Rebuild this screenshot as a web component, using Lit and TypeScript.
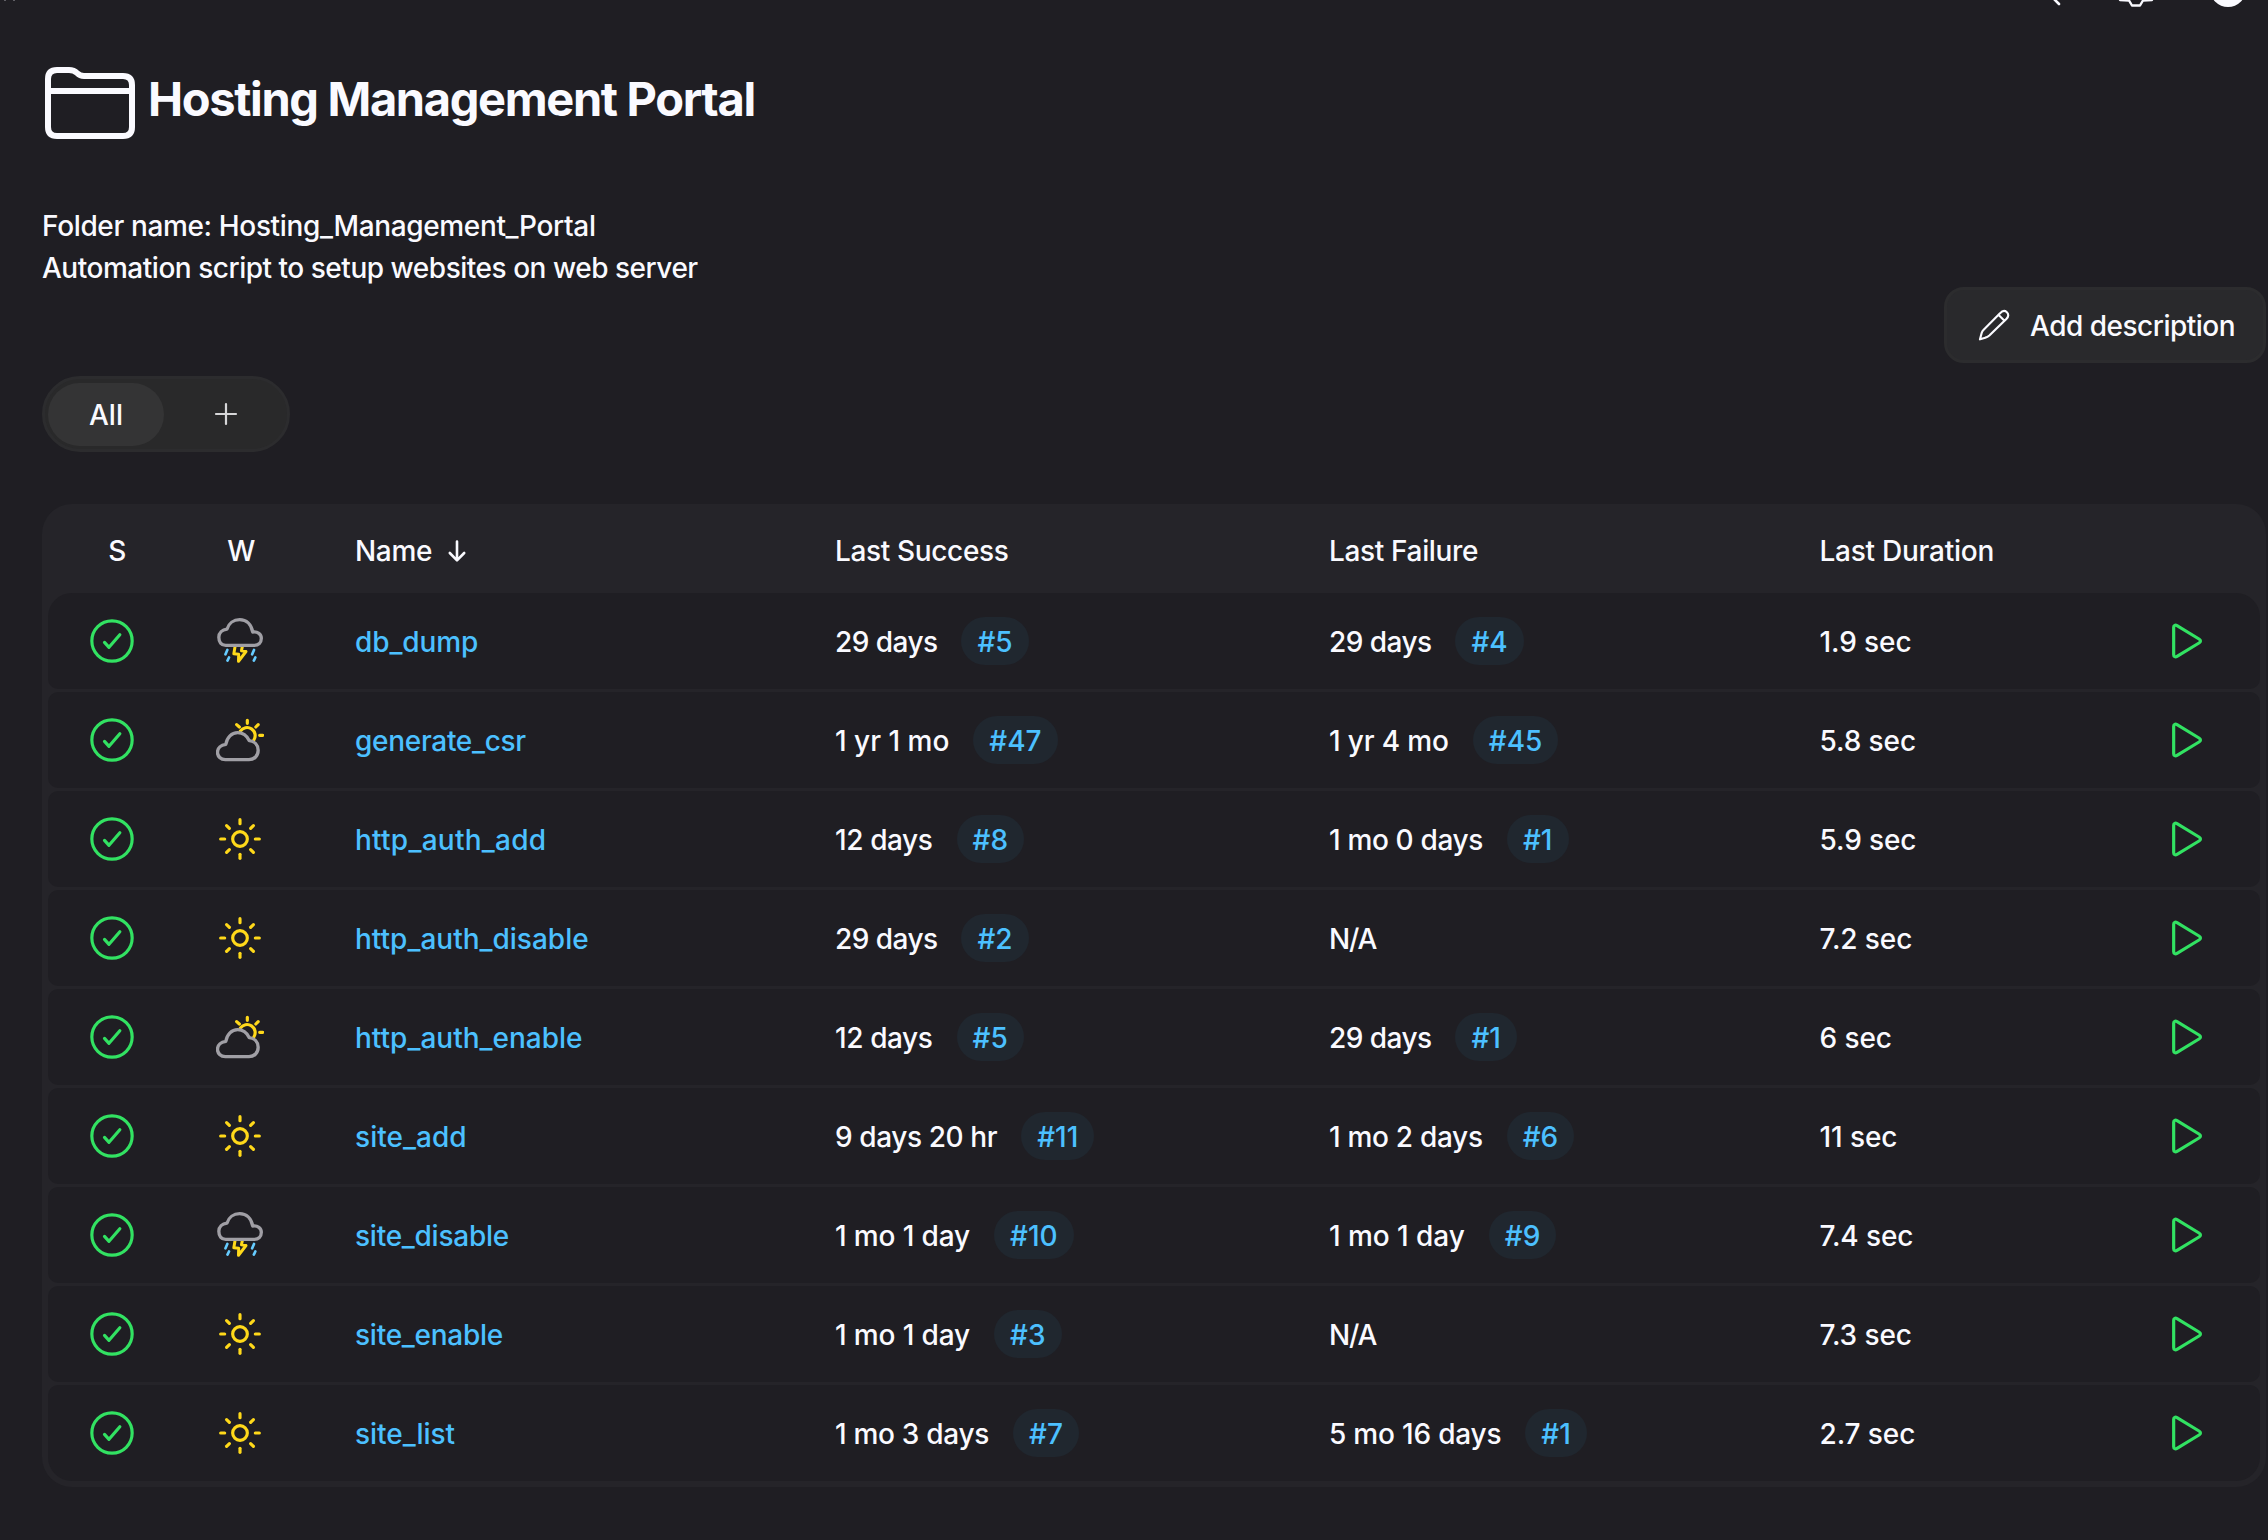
import { LitElement, html, css, svg } from "lit";
import { classMap } from "lit/directives/class-map.js";

type Weather = "storm" | "partly" | "sunny";
type Run = { text: string; ls?: number; build?: string };
type Job = { name: string; ls?: number; weather: Weather; success: Run; failure: Run; duration: string };

const JOBS: Job[] = [
  { name: "db_dump", ls: -0.1, weather: "storm", success: { text: "29 days", ls: -0.55, build: "#5" }, failure: { text: "29 days", ls: -0.55, build: "#4" }, duration: "1.9 sec" },
  { name: "generate_csr", ls: -0.3, weather: "partly", success: { text: "1 yr 1 mo", ls: 0, build: "#47" }, failure: { text: "1 yr 4 mo", ls: -0.15, build: "#45" }, duration: "5.8 sec" },
  { name: "http_auth_add", ls: 0.25, weather: "sunny", success: { text: "12 days", ls: -0.4, build: "#8" }, failure: { text: "1 mo 0 days", ls: -0.35, build: "#1" }, duration: "5.9 sec" },
  { name: "http_auth_disable", ls: 0, weather: "sunny", success: { text: "29 days", ls: -0.55, build: "#2" }, failure: { text: "N/A", ls: -1.2 }, duration: "7.2 sec" },
  { name: "http_auth_enable", ls: 0, weather: "partly", success: { text: "12 days", ls: -0.4, build: "#5" }, failure: { text: "29 days", ls: -0.55, build: "#1" }, duration: "6 sec" },
  { name: "site_add", ls: 0.05, weather: "sunny", success: { text: "9 days 20 hr", ls: -0.4, build: "#11" }, failure: { text: "1 mo 2 days", ls: -0.3, build: "#6" }, duration: "11 sec" },
  { name: "site_disable", ls: -0.25, weather: "storm", success: { text: "1 mo 1 day", ls: -0.12, build: "#10" }, failure: { text: "1 mo 1 day", ls: -0.05, build: "#9" }, duration: "7.4 sec" },
  { name: "site_enable", ls: -0.25, weather: "sunny", success: { text: "1 mo 1 day", ls: -0.12, build: "#3" }, failure: { text: "N/A", ls: -1.2 }, duration: "7.3 sec" },
  { name: "site_list", ls: -0.05, weather: "sunny", success: { text: "1 mo 3 days", ls: -0.3, build: "#7" }, failure: { text: "5 mo 16 days", ls: -0.2, build: "#1" }, duration: "2.7 sec" },
];

const RAYS = [0, 45, 90, 135, 180, 225, 270, 315];

const weatherIcons = {
  storm: () => html`<svg class="icon" viewBox="48 51 144 144">
    <path class="bolt" d="M105 140 L101.500 161 L116 163 L115.500 184 L138 154.500 L124.500 152 L127 140" />
    <path class="drop" d="M82 150 L76.500 163 M87 172.500 L82.500 182 M162 150 L156.500 163 M166 172.500 L161.500 182" />
    <path class="cloud" d="M77 136 C64 136 56.500 126 56.500 112 C56.500 98 67 89 81 87.500 C86 70 101 59 119 59 C139 59 154 73 158 96 C173 94 184 102 184 115 C184 128 175 136 163 136 Z" />
  </svg>`,
  partly: () => html`<svg class="icon" viewBox="48 348 144 144">
    <path class="sun" d="M121 393.500 A23.500 23.500 0 1 1 161.500 420 M142 361 V370 M110 374 L118 381 M174.500 374 L167.500 381 M179 406 H188" />
    <path class="cloud" d="M76 479 C62 479 52.500 469 52.500 457 C52.500 444 63 435 77.500 433 C81 412 95 398 113 398 C130 398 141 408 148 422 C163 424 174.500 435 174.500 451 C174.500 467 163 479 147 479 Z" />
  </svg>`,
  sunny: () => html`<svg class="icon" viewBox="-72 -72 144 144">
    <circle class="sun" r="22" />
    ${RAYS.map((a) => svg`<path class="sun" d=${a % 90 ? "M0 -45 V-57" : "M0 -46 V-58"} transform=${`rotate(${a})`} />`)}
  </svg>`,
};

class AppRoot extends LitElement {
  static styles = css`
    :host { display: block; }
    * { box-sizing: border-box; }
    .page {
      position: relative;
      width: 2268px;
      height: 1540px;
      overflow: hidden;
      background: #1f1e23;
      color: #fafaff;
      font: 460 28px/42px Inter, "Liberation Sans", sans-serif;
      white-space: nowrap;
      display: flex;
      flex-direction: column;
      padding: 0 2px 0 42px;
    }
    svg { display: block; fill: none; stroke-linecap: round; stroke-linejoin: round; }
    .topbar { position: absolute; left: 0; top: 0; width: 2268px; height: 10px; }
    .heading { display: flex; align-items: flex-start; height: 205px; padding-top: 60px; }
    .folder { width: 96px; height: 84px; stroke: #fafaff; stroke-width: 6; }
    h1 { margin: 9px 0 0 10px; font-size: 47px; line-height: 60px; font-weight: 680; letter-spacing: -1.35px; }
    .about { height: 82px; }
    .about p { margin: 0; }
    .about .first { letter-spacing: -0.36px; }
    .about .second { letter-spacing: -0.48px; }
    .button {
      align-self: flex-end;
      display: flex;
      align-items: center;
      width: 322px;
      height: 76px;
      padding-left: 29px;
      border: 3px solid #2c2c2e;
      border-radius: 20px;
      background: #29292c;
      letter-spacing: -0.5px;
    }
    .button span, .tab span { padding-top: 2px; }
    .pencil { width: 36px; height: 36px; margin-right: 18px; stroke: #fafaff; stroke-width: 6.5; }
    .tabs {
      display: flex;
      align-items: center;
      width: 248px;
      height: 76px;
      margin: 13px 0 52px;
      padding: 0 3px;
      border: 3px solid #2c2c2e;
      border-radius: 38px;
      background: #29292a;
    }
    .tab { display: flex; flex: none; align-items: center; justify-content: center; height: 63px; border-radius: 32px; }
    .tab.on { width: 116px; background: #343435; font-weight: 530; }
    .tab.add { width: 124px; }
    .plus { width: 24px; height: 24px; stroke: #d6d6d8; stroke-width: 2.2; }
    .table { display: flex; flex-direction: column; gap: 3px; width: 2224px; padding: 0 6px 6px; border-radius: 30px; background: #252429; }
    .row, .head { display: grid; grid-template-columns: 128px 128px 479px 495px 480px 300px 1fr; align-items: center; }
    .head { height: 86px; padding-top: 8px; font-weight: 510; letter-spacing: -0.35px; }
    .row { height: 96px; border-radius: 10px; background: #1f1e23; }
    .row.top { border-radius: 24px 24px 10px 10px; }
    .row.bottom { border-radius: 10px 10px 24px 24px; }
    .c { display: flex; justify-content: center; }
    .head .c { padding-left: 10px; }
    .head .w { padding-left: 2px; }
    .name { display: flex; align-items: center; padding: 2px 0 0 51px; }
    .arrow { width: 24px; height: 24px; margin-left: 13px; stroke: #fafaff; stroke-width: 2.6; }
    .run { display: flex; align-items: center; padding: 2px 0 0 52px; }
    .run.f { padding-left: 51px; }
    .run.d { padding-left: 61.5px; letter-spacing: -0.1px; }
    .head .run, .head .name { padding-top: 0; }
    .head .run.d { letter-spacing: -0.25px; }
    .link { color: #4cc0ff; }
    .badge { height: 48px; margin: -2px 0 0 24px; padding: 0 16px; border-radius: 24px; background: #20272f; color: #4cc0ff; line-height: 50px; }
    .icon { width: 48px; height: 48px; stroke-width: 9.5; }
    .ok, .play { stroke: #32e262; }
    .cloud { stroke: #a09fa5; stroke-width: 10; }
    .sun { stroke: #ffd91a; }
    .bolt { stroke: #ffd91a; stroke-width: 9; }
    .drop { stroke: #66ccff; stroke-width: 8; }
    .end { display: flex; justify-content: flex-end; padding-right: 48px; }
  `;

  private run(r: Run, cls: string) {
    return html`<div class=${"run " + cls}>
      <span style="letter-spacing:${r.ls ?? 0}px">${r.text}</span>${r.build ? html`<span class="badge">${r.build}</span>` : ""}
    </div>`;
  }

  private row(job: Job, i: number) {
    return html`<div class=${classMap({ row: true, top: i === 0, bottom: i === JOBS.length - 1 })}>
      <div class="c"><svg class="icon ok" viewBox="264 51 144 144"><circle cx="336" cy="123" r="60.500" /><path d="M313.500 127 L327 142 L359.500 104" /></svg></div>
      <div class="c">${weatherIcons[job.weather]()}</div>
      <div class="name"><span class="link" style="letter-spacing:${job.ls ?? 0}px">${job.name}</span></div>
      ${this.run(job.success, "s")} ${this.run(job.failure, "f")}
      <div class="run d">${job.duration}</div>
      <div class="end"><svg class="icon play" viewBox="612 147 144 144"><path d="M641 178 C641 172 646 170 651 173 L717 213 C723 217 723 221 717 225 L651 265 C646 268 641 266 641 260 Z" /></svg></div>
    </div>`;
  }

  render() {
    return html`<div class="page">
      <svg class="topbar" viewBox="0 0 2268 10" stroke="#fafaff" stroke-width="2.600">
        <path d="M2051 -4 L2059 4" />
        <path d="M2120 0 L2129 0.500 L2132 5.500 H2140 L2143 0.500 L2152 0" stroke-width="2.400" />
        <circle cx="2228" cy="-11" r="18" fill="#fafaff" stroke="none" />
        <path d="M4 0 H6 M13 0 H15" stroke="#77767c" stroke-width="1.500" stroke-linecap="butt" />
      </svg>
      <div class="heading">
        <svg class="folder" viewBox="42 60 96 84"><path d="M57 70 H69 C73 70 75 71 77 73 C79.500 75.500 81 76 84 76 H123 Q132 76 132 85 V127 Q132 136 123 136 H57 Q48 136 48 127 V79 Q48 70 57 70 Z M48 91 H132" /></svg>
        <h1>Hosting Management Portal</h1>
      </div>
      <div class="about">
        <p class="first">Folder name: Hosting_Management_Portal</p>
        <p class="second">Automation script to setup websites on web server</p>
      </div>
      <div class="button">
        <svg class="pencil" viewBox="108 81 108 108"><path d="M120 178 L125 159 Q126.500 154 131 149.500 L180 100 C186 93 194 91 200 96 C207 102 206 110 199 117 L148 166.500 C143 171 140 172 136 173 Z M176 105 L193.500 122" /></svg>
        <span>Add description</span>
      </div>
      <div class="tabs">
        <div class="tab on"><span>All</span></div>
        <div class="tab add"><svg class="plus" viewBox="0 0 24 24"><path d="M12 2 V22 M2 12 H22" /></svg></div>
      </div>
      <div class="table">
        <div class="head">
          <div class="c">S</div>
          <div class="c w">W</div>
          <div class="name">Name<svg class="arrow" viewBox="0 0 24 24"><path d="M12 2.500 V21 M4.800 14 L12 21.300 L19.200 14" /></svg></div>
          <div class="run">Last Success</div>
          <div class="run f">Last Failure</div>
          <div class="run d">Last Duration</div>
          <div></div>
        </div>
        ${JOBS.map((job, i) => this.row(job, i))}
      </div>
    </div>`;
  }
}
customElements.define("app-root", AppRoot);
